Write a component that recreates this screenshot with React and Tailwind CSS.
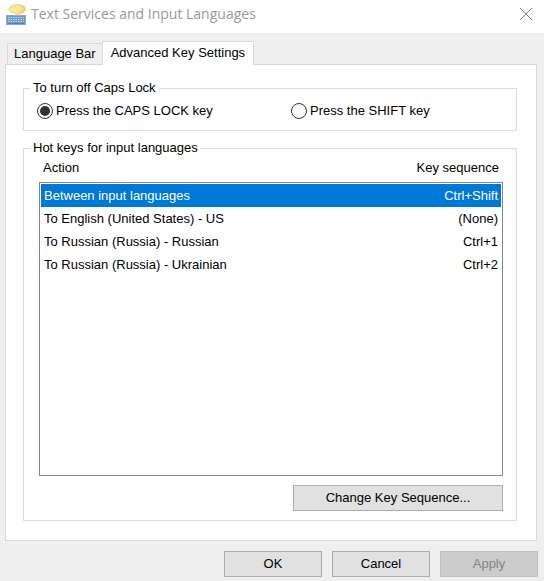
import React, { useState } from "react";

const hotKeys = [
  { action: "Between input languages", keys: "Ctrl+Shift" },
  { action: "To English (United States) - US", keys: "(None)" },
  { action: "To Russian (Russia) - Russian", keys: "Ctrl+1" },
  { action: "To Russian (Russia) - Ukrainian", keys: "Ctrl+2" },
];

function KeyboardIcon() {
  return (
    <svg width="20" height="22" viewBox="0 0 20 22" aria-hidden="true">
      <defs>
        <radialGradient id="bubble" cx="0.4" cy="0.4" r="0.65">
          <stop offset="0" stopColor="#fff3b8" />
          <stop offset="0.6" stopColor="#fbdd80" />
          <stop offset="1" stopColor="#ecbc50" />
        </radialGradient>
      </defs>
      <rect x="0.5" y="12.5" width="19" height="9" fill="#6f9acb" stroke="#86a8d0" />
      <path
        d="M2 14.5h16M2 16.5h16M2 18.5h16"
        stroke="#c5daf0"
        strokeWidth="1"
        strokeDasharray="1.5 1"
      />
      <path d="M2 20.5h3M6 20.5h8M15 20.5h3" stroke="#4f7db8" />
      <path
        d="M11.500 1.500C16 1.500 19.500 3.300 19.500 6c0 2.600-2.600 4.100-6 4.600L12 12.700l-1.700-2.100C6 10.200 3 8.600 3 6 3 3.300 7 1.500 11.500 1.500z"
        fill="url(#bubble)"
        stroke="#ecc878"
        strokeWidth="0.6"
      />
    </svg>
  );
}

function RadioOption({ id, label, checked, onChange }) {
  return (
    <div className="flex items-center gap-[3px]">
      <input
        type="radio"
        name="capsLock"
        id={id}
        checked={checked}
        onChange={onChange}
        className="size-4 shrink-0 appearance-none rounded-full border border-[#333333] bg-white bg-clip-content p-[2px] checked:bg-[#333333]"
      />
      <label htmlFor={id}>{label}</label>
    </div>
  );
}

function App() {
  const [capsLock, setCapsLock] = useState("caps");
  const [selected, setSelected] = useState(0);

  return (
    <div className="flex min-h-screen flex-col bg-[#efefef] font-['Liberation_Sans',sans-serif] text-[13px] leading-[18px] text-black">
      <header className="flex h-[33px] items-center bg-white pr-3 pl-[6px] pb-[5px]">
        <KeyboardIcon />
        <h1 className="ml-[5px] grow font-['Open_Sans',sans-serif] text-[14px] text-[#999999]">
          Text Services and Input Languages
        </h1>
        <button type="button" aria-label="Close">
          <svg width="12" height="12" viewBox="0 0 12 12" stroke="#8a8a8a">
            <path d="M0 0l12 12M12 0L0 12" />
          </svg>
        </button>
      </header>

      <div role="tablist" className="z-10 -mb-px flex items-end pt-2 pl-[7px]">
        <button
          type="button"
          role="tab"
          aria-selected="false"
          className="mb-px h-[21px] border-t border-l border-[#d9d9d9] px-[6px]"
        >
          Language Bar
        </button>
        <button
          type="button"
          role="tab"
          aria-selected="true"
          className="h-6 border border-b-0 border-[#d9d9d9] bg-white px-2 pb-[2px]"
        >
          Advanced Key Settings
        </button>
      </div>

      <main className="mr-[7px] ml-[5px] flex grow flex-col gap-2 border border-[#d9d9d9] bg-white pt-[14px] pr-[19px] pb-[19px] pl-[17px]">
        <fieldset className="border border-[#dcdcdc] pt-[5px] pb-[10px] pl-[13px]">
          <legend className="-ml-[7px] px-[3px]">To turn off Caps Lock</legend>
          <div className="grid grid-cols-[254px_1fr]">
            <RadioOption
              id="caps"
              label="Press the CAPS LOCK key"
              checked={capsLock === "caps"}
              onChange={() => setCapsLock("caps")}
            />
            <RadioOption
              id="shift"
              label="Press the SHIFT key"
              checked={capsLock === "shift"}
              onChange={() => setCapsLock("shift")}
            />
          </div>
        </fieldset>

        <fieldset className="flex grow flex-col border border-[#dcdcdc] pt-[2px] pr-[13px] pb-[9px] pl-[15px]">
          <legend className="-ml-[9px] px-[3px]">Hot keys for input languages</legend>
          <table className="block">
            <thead className="block pb-[5px]">
              <tr className="flex justify-between px-1">
                <th className="font-normal">Action</th>
                <th className="font-normal">Key sequence</th>
              </tr>
            </thead>
            <tbody className="block min-h-[294px] border border-[#828790] p-px">
              {hotKeys.map((item, i) => (
                <tr
                  key={item.action}
                  onClick={() => setSelected(i)}
                  className={`flex h-[23px] items-center justify-between px-[3px] ${
                    i === selected ? "bg-[#0078d7] text-white" : ""
                  }`}
                >
                  <td>{item.action}</td>
                  <td>{item.keys}</td>
                </tr>
              ))}
            </tbody>
          </table>
          <button
            type="button"
            className="mt-[9px] h-[26px] w-[210px] self-end border border-[#adadad] bg-[#e1e1e1]"
          >
            Change Key Sequence...
          </button>
        </fieldset>
      </main>

      <footer className="flex justify-end gap-[10px] pt-[10px] pr-[6px] pb-1">
        <button type="button" className="h-[26px] w-[98px] border border-[#adadad] bg-[#e1e1e1]">
          OK
        </button>
        <button type="button" className="h-[26px] w-[98px] border border-[#adadad] bg-[#e1e1e1]">
          Cancel
        </button>
        <button
          type="button"
          disabled
          className="h-[26px] w-[98px] border border-[#bfbfbf] bg-[#cccccc] text-[#838383]"
        >
          Apply
        </button>
      </footer>
    </div>
  );
}

export default App;
